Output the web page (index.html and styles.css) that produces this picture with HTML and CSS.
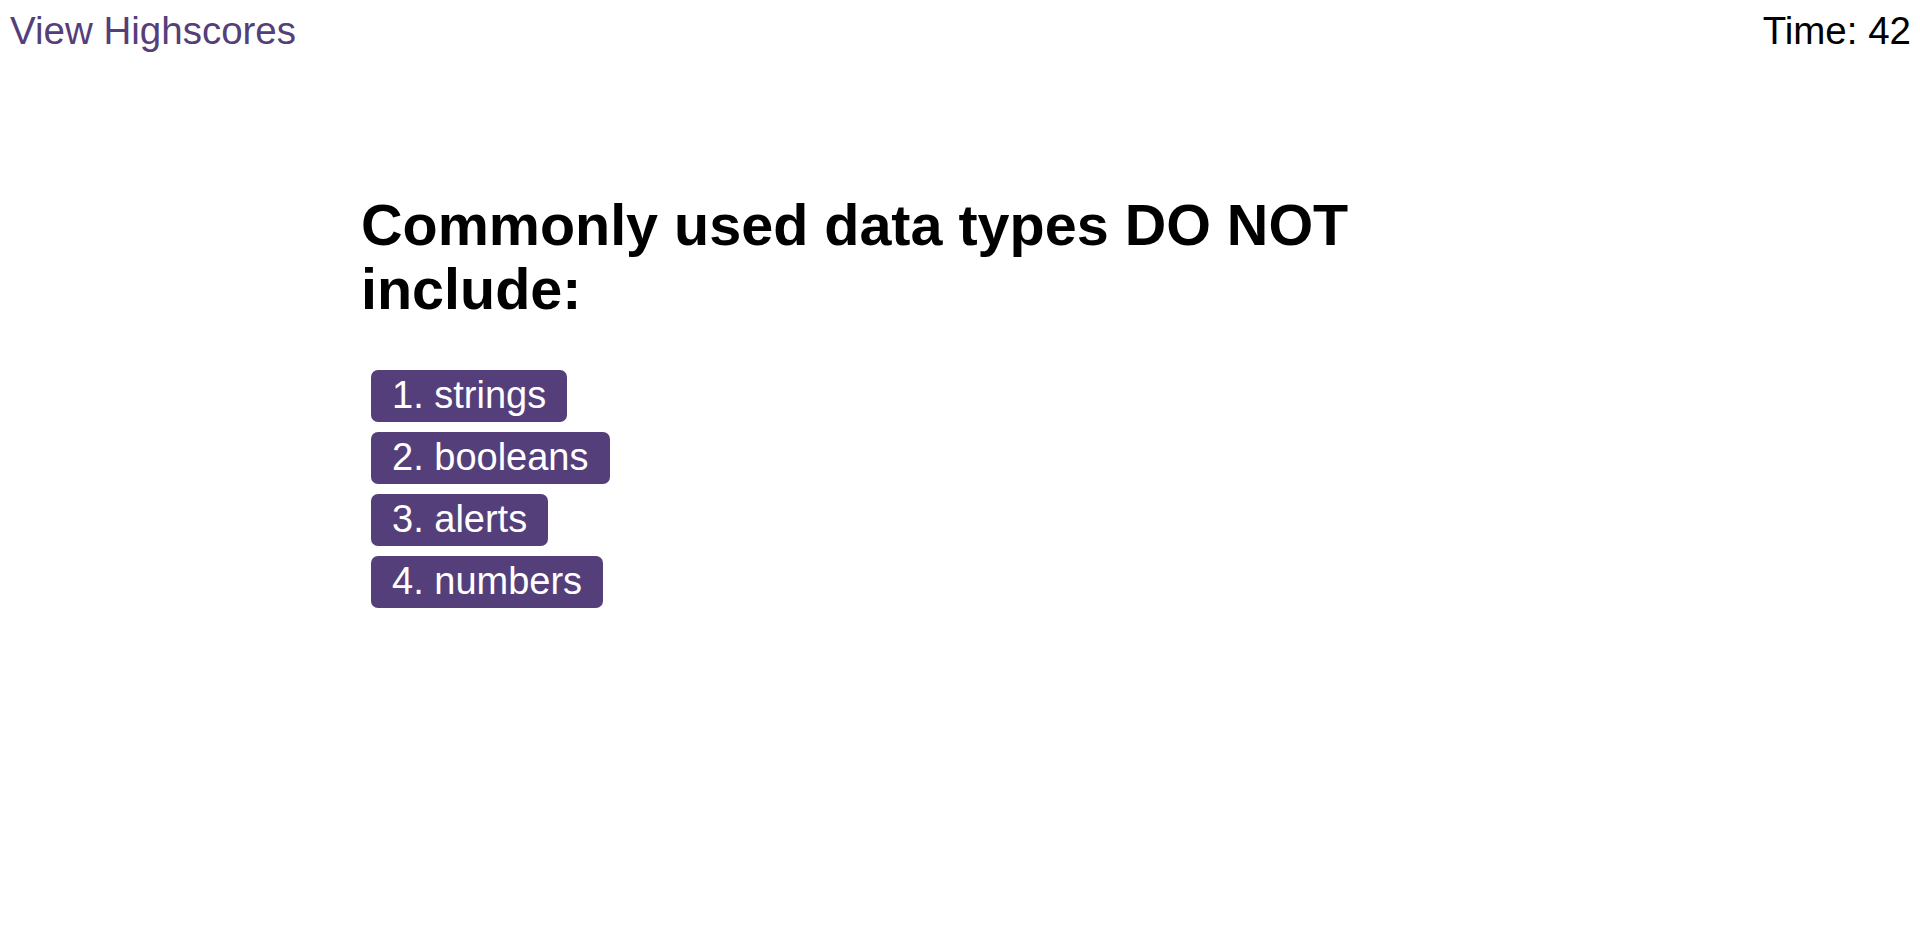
FILE: index.html
```html
<!DOCTYPE html>
<html lang="en">
<head>
<meta charset="utf-8">
<title>Code Quiz</title>
<link rel="stylesheet" href="styles.css">
</head>
<body>
<header class="topbar">
  <a class="highscores" href="#">View Highscores</a>
  <div class="timer">Time: 42</div>
</header>
<main class="quiz">
  <h1 class="question">Commonly used data types DO NOT include:</h1>
  <div class="choices">
    <button class="choice">1. strings</button>
    <button class="choice">2. booleans</button>
    <button class="choice">3. alerts</button>
    <button class="choice">4. numbers</button>
  </div>
</main>
</body>
</html>
```
FILE: styles.css
```css
html, body {
  margin: 0;
  padding: 0;
  background: #ffffff;
  font-family: "Liberation Sans", Arial, sans-serif;
  color: #000;
}

.topbar {
  display: flex;
  justify-content: space-between;
  align-items: flex-start;
  padding: 9px 9px 0 10px;
  font-size: 38.5px;
}

.highscores {
  color: #543f7a;
  text-decoration: none;
}

.timer {
  color: #000;
}

.quiz {
  width: 1200px;
  margin: 0 auto;
  padding-top: 140px;
}

.question {
  margin: 0;
  font-size: 57.5px;
  font-weight: bold;
  line-height: 64px;
  padding-left: 1px;
}

.choices {
  display: flex;
  flex-direction: column;
  align-items: flex-start;
  gap: 10px;
  margin-top: 49px;
  padding-left: 11px;
}

.choice {
  font-family: "Liberation Sans", Arial, sans-serif;
  font-size: 38px;
  line-height: 40px;
  color: #fff;
  background: #543f7a;
  border: none;
  border-radius: 7px;
  padding: 5px 21px 7px;
  margin: 0;
  cursor: pointer;
}
```
